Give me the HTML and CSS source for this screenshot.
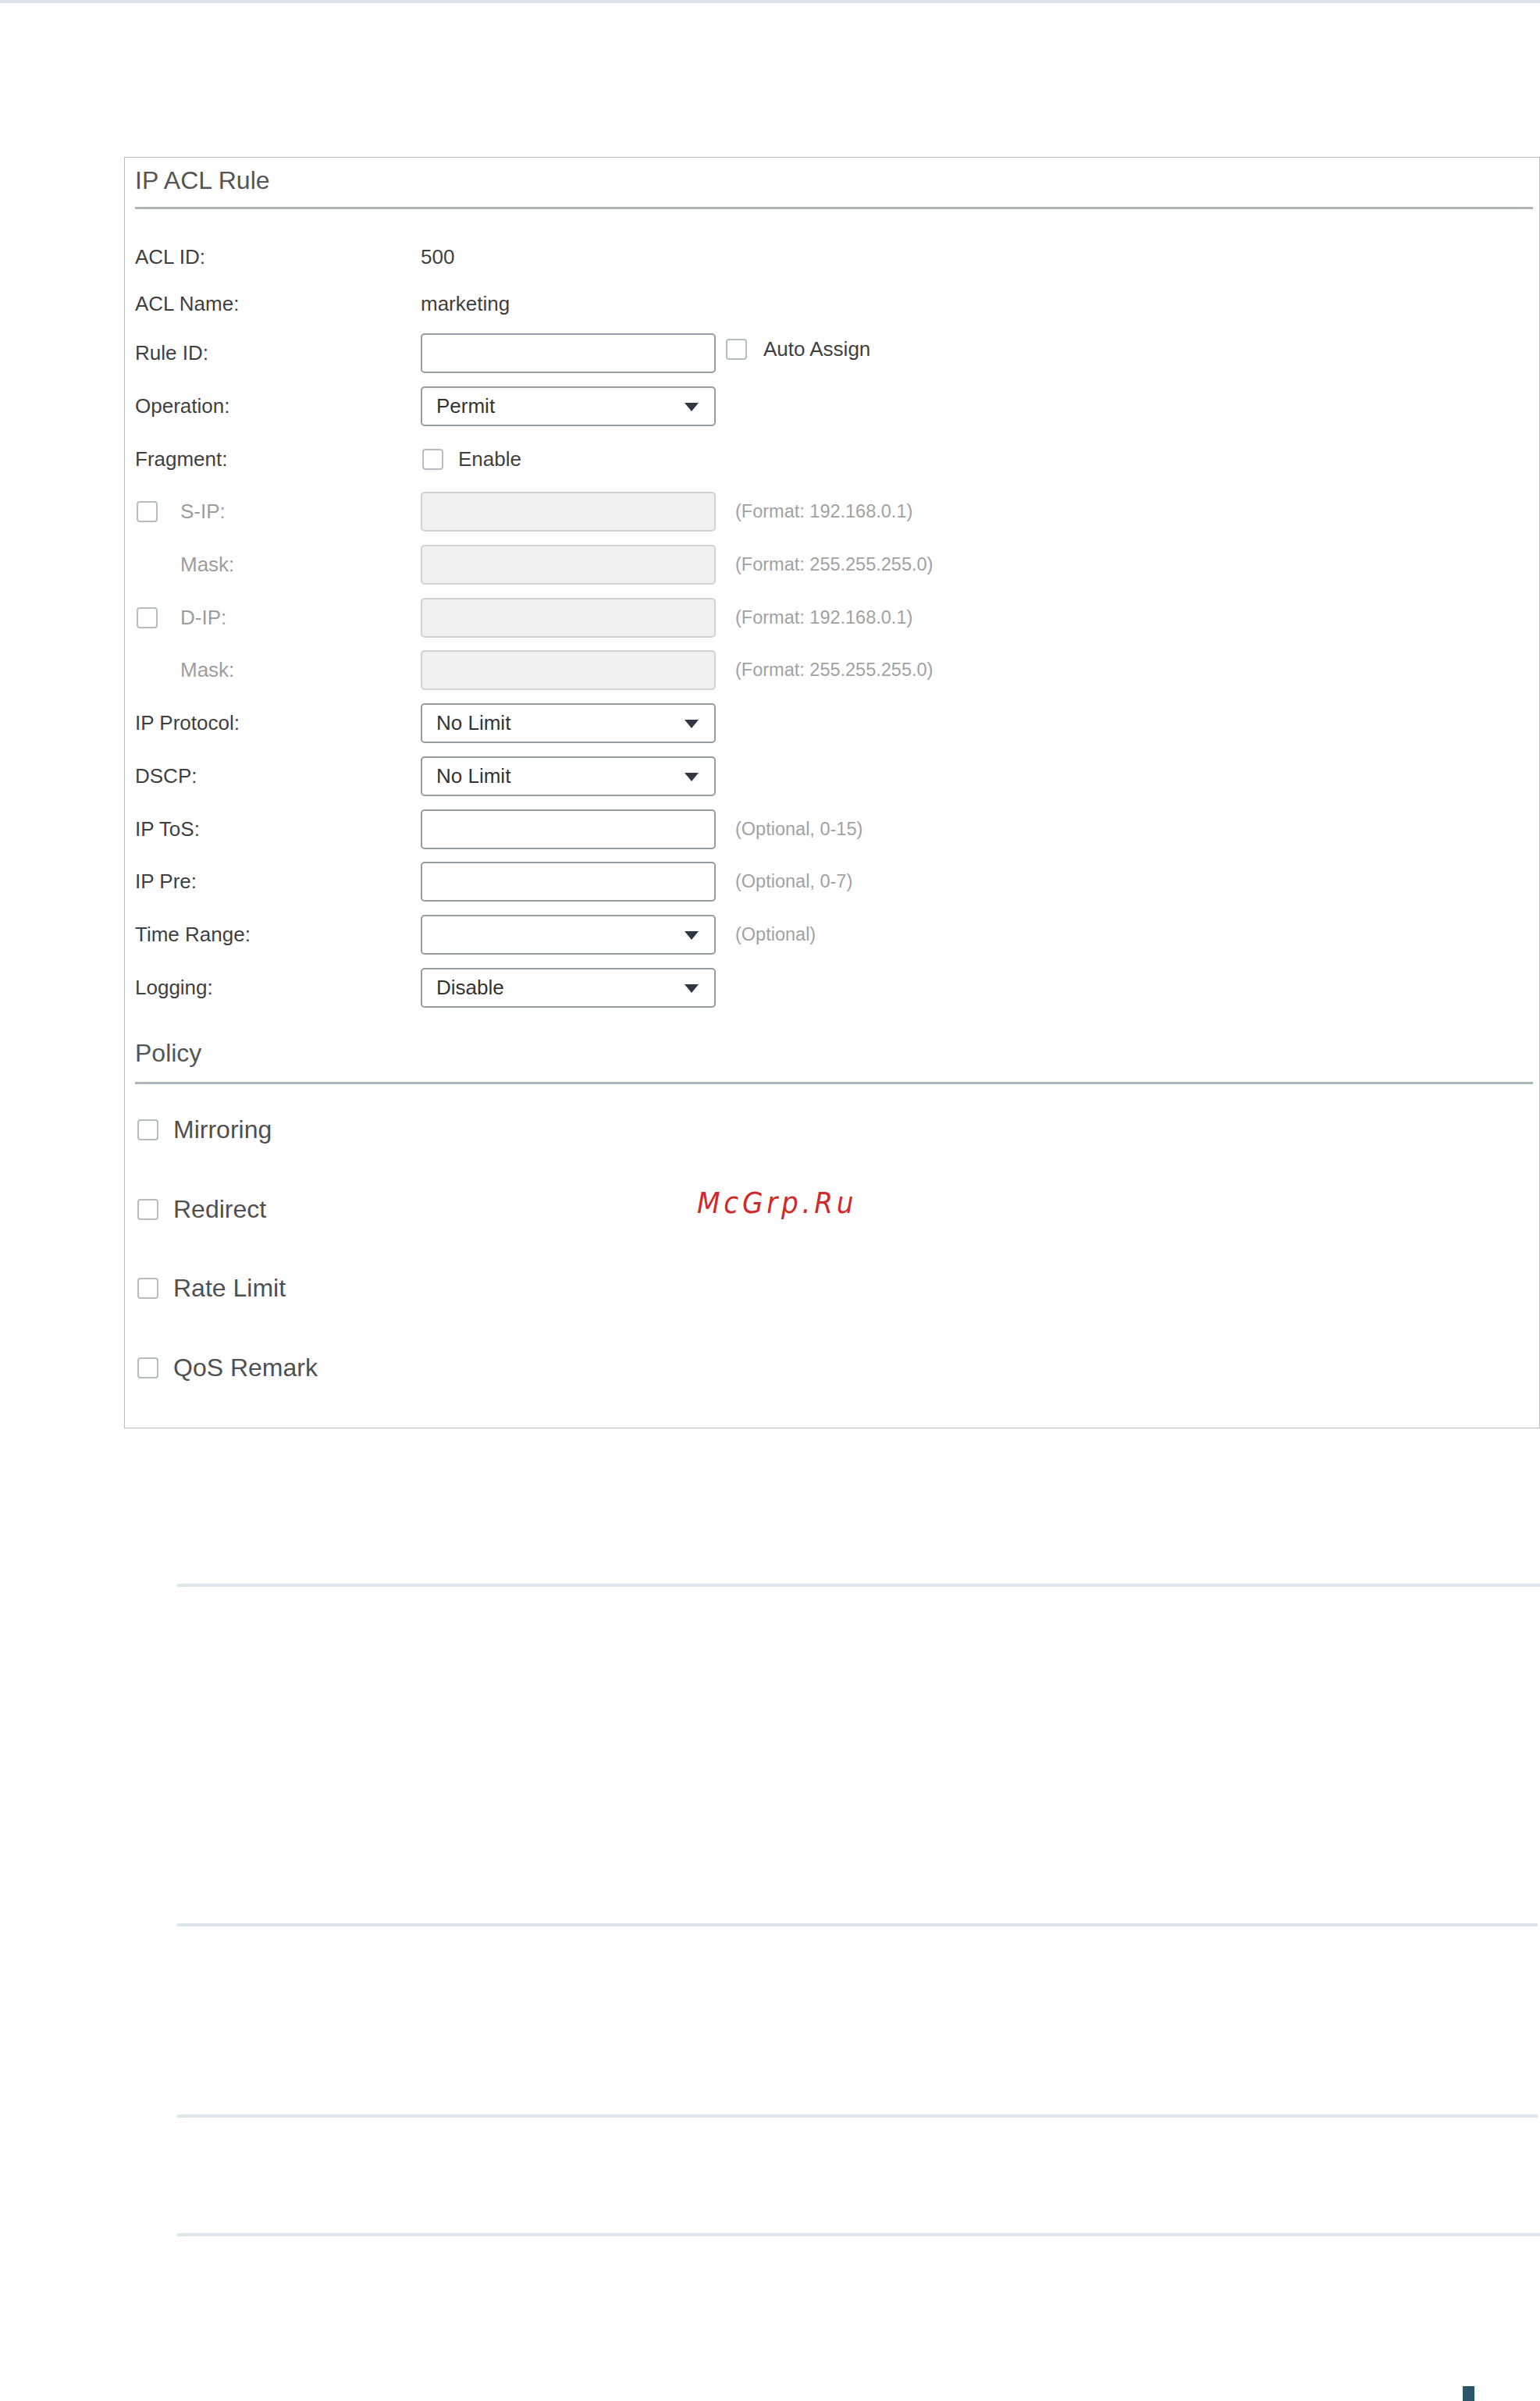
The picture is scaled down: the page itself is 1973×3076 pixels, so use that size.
FILE: index.html
```html
<!DOCTYPE html>
<html lang="en">
<head>
  <meta charset="UTF-8">
  <meta name="viewport" content="width=device-width, initial-scale=1.0">
  <title>IP ACL Rule</title>
  <link rel="stylesheet" href="styles.css">
</head>
<body>

  <div class="top-bar"></div>

  <!-- IP ACL Rule panel -->
  <div class="panel">
    <h2 class="section-title">IP ACL Rule</h2>

    <div class="form">
      <div class="row row-static">
        <div class="label">ACL ID:</div>
        <div class="value">500</div>
      </div>
      <div class="row row-static">
        <div class="label">ACL Name:</div>
        <div class="value">marketing</div>
      </div>

      <div class="row">
        <div class="label">Rule ID:</div>
        <input class="field" type="text">
        <label class="check check-side">
          <input type="checkbox"> <span>Auto Assign</span>
        </label>
      </div>
      <div class="row">
        <div class="label">Operation:</div>
        <div class="field select"><span>Permit</span><span class="arrow"></span></div>
      </div>
      <div class="row">
        <div class="label">Fragment:</div>
        <label class="check">
          <input type="checkbox"> <span>Enable</span>
        </label>
      </div>

      <div class="row">
        <label class="label label-check disabled">
          <input type="checkbox"> <span>S-IP:</span>
        </label>
        <input class="field" type="text" disabled>
        <span class="hint">(Format: 192.168.0.1)</span>
      </div>
      <div class="row">
        <div class="label label-indent disabled">Mask:</div>
        <input class="field" type="text" disabled>
        <span class="hint">(Format: 255.255.255.0)</span>
      </div>
      <div class="row">
        <label class="label label-check disabled">
          <input type="checkbox"> <span>D-IP:</span>
        </label>
        <input class="field" type="text" disabled>
        <span class="hint">(Format: 192.168.0.1)</span>
      </div>
      <div class="row">
        <div class="label label-indent disabled">Mask:</div>
        <input class="field" type="text" disabled>
        <span class="hint">(Format: 255.255.255.0)</span>
      </div>

      <div class="row">
        <div class="label">IP Protocol:</div>
        <div class="field select"><span>No Limit</span><span class="arrow"></span></div>
      </div>
      <div class="row">
        <div class="label">DSCP:</div>
        <div class="field select"><span>No Limit</span><span class="arrow"></span></div>
      </div>
      <div class="row">
        <div class="label">IP ToS:</div>
        <input class="field" type="text">
        <span class="hint">(Optional, 0-15)</span>
      </div>
      <div class="row">
        <div class="label">IP Pre:</div>
        <input class="field" type="text">
        <span class="hint">(Optional, 0-7)</span>
      </div>
      <div class="row">
        <div class="label">Time Range:</div>
        <div class="field select"><span></span><span class="arrow"></span></div>
        <span class="hint">(Optional)</span>
      </div>
      <div class="row">
        <div class="label">Logging:</div>
        <div class="field select"><span>Disable</span><span class="arrow"></span></div>
      </div>
    </div>

    <!-- Policy -->
    <h2 class="section-title policy-title">Policy</h2>

    <div class="policy-list">
      <label class="policy-item"><input type="checkbox"> <span>Mirroring</span></label>
      <label class="policy-item"><input type="checkbox"> <span>Redirect</span></label>
      <label class="policy-item"><input type="checkbox"> <span>Rate Limit</span></label>
      <label class="policy-item"><input type="checkbox"> <span>QoS Remark</span></label>
    </div>
  </div>

  <div class="watermark">McGrp.Ru</div>

  <!-- page rules below the panel -->
  <div class="rules">
    <div class="rule rule-1"></div>
    <div class="rule rule-2"></div>
    <div class="rule rule-3"></div>
    <div class="rule rule-4"></div>
  </div>

  <div class="page-foot">
    <span class="page-mark"></span>
  </div>

</body>
</html>
```

FILE: styles.css
```css
/* Reset */
* {
  margin: 0;
  padding: 0;
  box-sizing: border-box;
}

html,
body {
  overflow: hidden;
}

body {
  position: relative;
  width: 1973px;
  font-family: "Liberation Sans", Arial, sans-serif;
  color: #404040;
  background: #fff;
}

.top-bar {
  height: 4px;
  background: #dde6ea;
}

/* Panel */
.panel {
  margin: 197px 0 0 159px;
  border: 1px solid #bcbcbc;
  padding: 0 8px 26px 13px;
}

.section-title {
  font-size: 32px;
  font-weight: normal;
  line-height: 36px;
  color: #555;
  padding: 11px 0 16px;
  border-bottom: 3px solid #adb4b8;
}

.policy-title {
  margin-top: 32px;
  padding: 0 0 19px;
}

/* Form rows */
.form {
  margin-top: 31px;
}

.row {
  display: flex;
  align-items: center;
  height: 67.7px;
  font-size: 26px;
}

.row-static {
  height: 60px;
}

.label {
  width: 366px;
  flex-shrink: 0;
  color: #3f3f3f;
}

.label.disabled {
  color: #9d9d9d;
}

.label-check {
  display: flex;
  align-items: center;
  gap: 29px;
}

.label-check input {
  margin-left: 2px;
}

.label-indent {
  padding-left: 58px;
}

.value {
  color: #3f3f3f;
}

.field {
  width: 378px;
  height: 51px;
  border: 2px solid #979ca0;
  border-radius: 5px;
  background: #fff;
  font-family: inherit;
  font-size: 26px;
  color: #333;
  outline: none;
}

.field:disabled {
  background: #f0f0f0;
  border-color: #d2d2d2;
}

.select {
  display: flex;
  align-items: center;
  justify-content: space-between;
  padding: 0 20px 0 18px;
}

.select .arrow {
  width: 0;
  height: 0;
  border-left: 9.5px solid transparent;
  border-right: 9.5px solid transparent;
  border-top: 11px solid #2f3840;
  margin-top: 2px;
}

.hint {
  margin-left: 25px;
  font-size: 23.5px;
  color: #a2a2a2;
}

/* Checkboxes */
input[type="checkbox"] {
  appearance: none;
  -webkit-appearance: none;
  width: 27px;
  height: 27px;
  border: 2px solid #b8bcc0;
  border-radius: 4px;
  background: #fff;
  flex-shrink: 0;
}

.check {
  display: flex;
  align-items: center;
  gap: 19px;
  color: #3f3f3f;
}

.check input {
  margin-left: 2px;
}

.check-side {
  margin-left: 13px;
  margin-top: -11px;
  gap: 21px;
}

.check-side input {
  margin-left: 0;
}

/* Policy */
.policy-list {
  margin-top: 8px;
}

.policy-item {
  display: flex;
  align-items: center;
  gap: 19px;
  height: 101.5px;
  font-size: 32px;
  color: #505050;
}

.policy-item input {
  margin-left: 3px;
}

.watermark {
  position: absolute;
  left: 893px;
  top: 1522px;
  font-family: "DejaVu Sans Condensed", "DejaVu Sans", sans-serif;
  font-size: 38px;
  line-height: 38px;
  font-style: italic;
  letter-spacing: 4.8px;
  color: #cf2a2a;
}

/* Rules under the panel */
.rules {
  padding-left: 227px;
}

.rule {
  height: 4px;
  background: #dce7eb;
}

.rule-1 {
  margin-top: 199px;
}

.rule-2 {
  margin-top: 431px;
  margin-right: 3px;
}

.rule-3 {
  margin-top: 241px;
  margin-right: 3px;
}

.rule-4 {
  margin-top: 148px;
}

.page-foot {
  display: flex;
  justify-content: flex-end;
  padding-right: 84px;
  margin-top: 192px;
}

.page-mark {
  width: 15px;
  height: 19px;
  background: #2b5669;
}
```
